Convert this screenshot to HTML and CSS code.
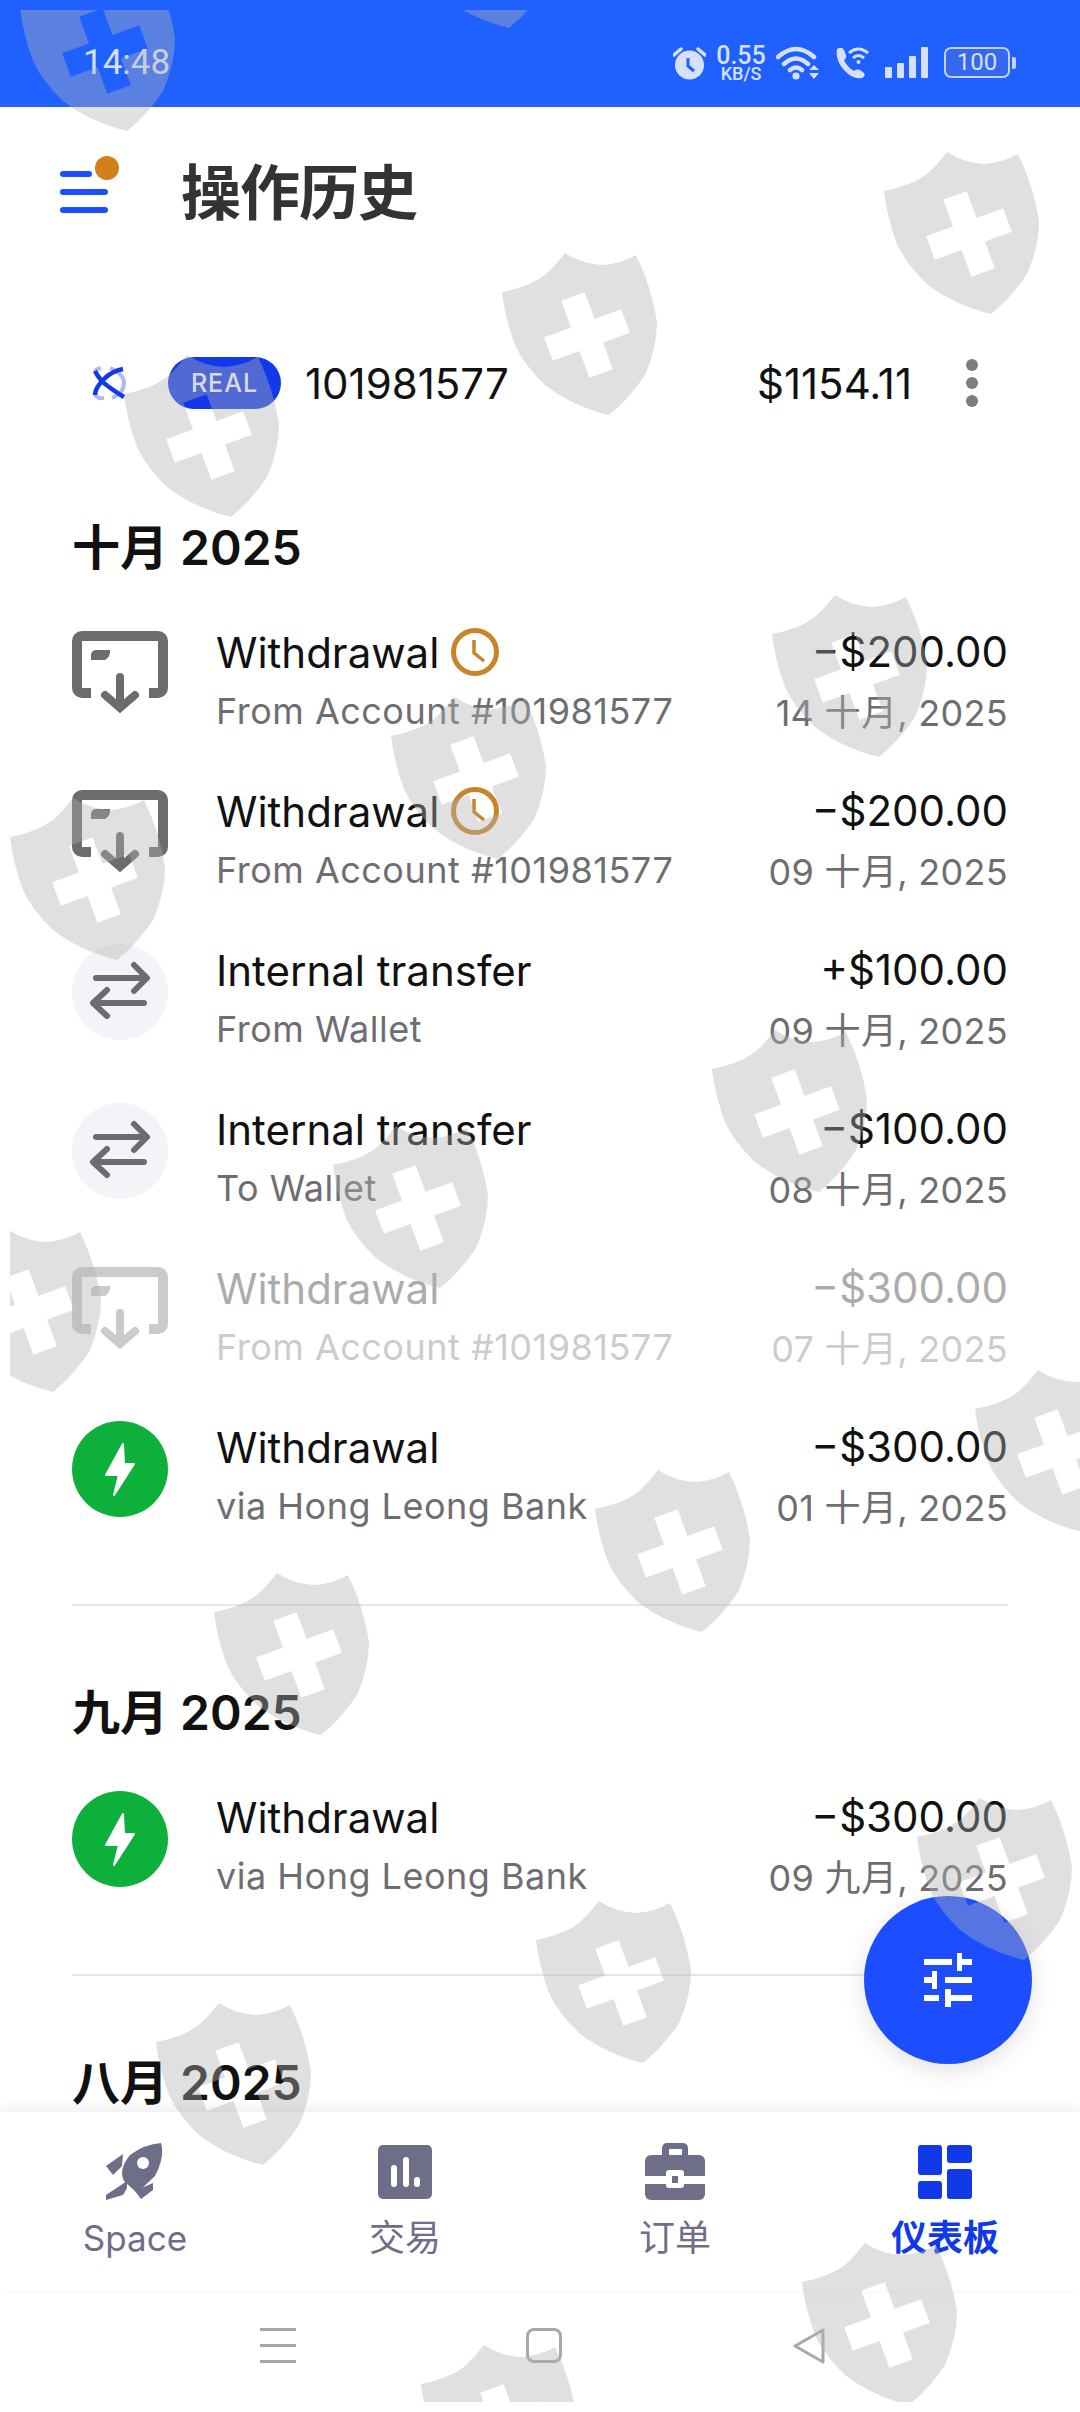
FILE: index.html
```html
<!DOCTYPE html>
<html lang="zh">
<head>
    <meta charset="UTF-8">
    <meta name="viewport" content="width=device-width, initial-scale=1.0">
    <title>操作历史</title>
    <link rel="stylesheet" href="styles.css">
</head>
<body>
    <svg class="defs" width="0" height="0">
        <defs>
            <symbol id="shield" viewBox="0 0 155 162">
                <path fill-rule="evenodd" d="M63 0Q80 11 100 12Q118 11 134 2Q150 35 155 69Q155 95 143 122Q128 145 107 162Q70 153 43 132Q22 112 13 92Q3 65 0 39Q27 34 43 22Q54 12 63 0ZM59.2 47.8L82.7 39.2L92.5 66L119.2 56.3L127.8 79.8L101 89.5L110.8 116.2L87.3 124.8L77.6 98L50.8 107.8L42.2 84.3L69 74.6Z"/>
            </symbol>
            <symbol id="withdraw" viewBox="0 0 96 84">
                <path d="M19 62H10a5 5 0 0 1-5-5V10a5 5 0 0 1 5-5H86a5 5 0 0 1 5 5V57a5 5 0 0 1-5 5H77" fill="none" stroke="currentColor" stroke-width="10"/>
                <path d="M19 24a5 5 0 0 1 5-5H38a10 10 0 0 1-5 10H19Z" fill="currentColor"/>
                <path d="M48 46V76M33 64L48 77L63 64" fill="none" stroke="currentColor" stroke-width="8" stroke-linecap="round"/>
            </symbol>
            <symbol id="clock" viewBox="0 0 48 48">
                <circle cx="24" cy="24" r="21.5" fill="none" stroke="#c9842a" stroke-width="5"/>
                <path d="M23 12V25L33 33" fill="none" stroke="#c9842a" stroke-width="3.5"/>
            </symbol>
            <symbol id="transfer" viewBox="0 0 96 96">
                <path d="M24 34H74M62 21L75 34L62 47M72 59H22M35 46L21 59L35 72" fill="none" stroke="#6c6c70" stroke-width="6" stroke-linecap="round" stroke-linejoin="round"/>
            </symbol>
            <symbol id="bolt" viewBox="0 0 96 96">
                <path d="M51 23L34 54H47L42 74L62 43H52Z" fill="#fff" stroke="#fff" stroke-width="2" stroke-linejoin="round"/>
            </symbol>
        </defs>
    </svg>

    <div class="phone">
        <div class="status-bar">
            <span class="clock-time">14:48</span>
            <div class="status-icons">
                <svg class="st-alarm" viewBox="0 0 33 34">
                    <circle cx="16.5" cy="19" r="14.5" fill="currentColor"/>
                    <path d="M1 9L8 3M32 9L25 3" stroke="currentColor" stroke-width="3.5" stroke-linecap="round"/>
                    <path d="M15 12V20L21 25" fill="none" stroke="#2060ff" stroke-width="3"/>
                </svg>
                <div class="net-speed"><span>0.55</span><small>KB/S</small></div>
                <svg class="st-wifi" viewBox="0 0 44 34">
                    <path d="M2 11Q20-5 38 11M8 18Q20 7 32 18M14 24Q20 19 26 24" fill="none" stroke="currentColor" stroke-width="4.5" stroke-linecap="round"/>
                    <circle cx="20" cy="30" r="3.6" fill="currentColor"/>
                    <path d="M33 24L38 19L43 24ZM33 27L38 33L43 27Z" fill="currentColor"/>
                </svg>
                <svg class="st-call" viewBox="0 0 35 32">
                    <path d="M2 2Q7-1 9 3L11 8Q12 11 9 13Q12 20 19 24Q22 21 25 23L29 26Q31 29 27 31Q18 33 9 23Q0 13 2 2Z" fill="currentColor"/>
                    <path d="M14 6Q23-2 33 6M18 11Q23 6 29 11" fill="none" stroke="currentColor" stroke-width="3"/>
                    <circle cx="23.5" cy="15" r="2" fill="currentColor"/>
                </svg>
                <div class="st-signal"><i class="s1"></i><i class="s2"></i><i class="s3"></i><i class="s4"></i></div>
                <div class="st-battery"><span class="batt-box">100</span><i class="batt-nub"></i></div>
            </div>
        </div>

        <header class="topbar">
            <button class="menu-btn" aria-label="menu">
                <i class="bar bar-short"></i><i class="bar"></i><i class="bar"></i>
                <i class="notify-dot"></i>
            </button>
            <h1>操作历史</h1>
        </header>

        <div class="account-row">
            <svg class="acc-logo" viewBox="0 0 34 34">
                <path d="M18 2Q32 8 32 17Q32 27 20 32M3 7Q3 3 9 2M3 28Q5 33 12 32" fill="none" stroke="#aeb9f3" stroke-width="4"/>
                <path d="M31 3Q20 5 12 13Q3 22 3 29M3 5Q8 15 17 21Q25 27 32 31" fill="none" stroke="#1239e8" stroke-width="4.5"/>
            </svg>
            <span class="real-pill">REAL</span>
            <span class="acc-number">101981577</span>
            <span class="acc-balance">$1154.11</span>
            <div class="kebab"><i></i><i></i><i></i></div>
        </div>

        <main class="history">
            <section class="month">
                <h2>十月 2025</h2>
                <div class="tx">
                    <svg class="tx-icon tx-withdraw"><use href="#withdraw"/></svg>
                    <div class="tx-info">
                        <div class="tx-title">Withdrawal <svg class="tx-clock"><use href="#clock"/></svg></div>
                        <div class="tx-sub">From Account #101981577</div>
                    </div>
                    <div class="tx-right">
                        <div class="tx-amount">−$200.00</div>
                        <div class="tx-date">14 十月, 2025</div>
                    </div>
                </div>
                <div class="tx">
                    <svg class="tx-icon tx-withdraw"><use href="#withdraw"/></svg>
                    <div class="tx-info">
                        <div class="tx-title">Withdrawal <svg class="tx-clock"><use href="#clock"/></svg></div>
                        <div class="tx-sub">From Account #101981577</div>
                    </div>
                    <div class="tx-right">
                        <div class="tx-amount">−$200.00</div>
                        <div class="tx-date">09 十月, 2025</div>
                    </div>
                </div>
                <div class="tx">
                    <svg class="tx-icon tx-round tx-transfer"><use href="#transfer"/></svg>
                    <div class="tx-info">
                        <div class="tx-title">Internal transfer</div>
                        <div class="tx-sub">From Wallet</div>
                    </div>
                    <div class="tx-right">
                        <div class="tx-amount">+$100.00</div>
                        <div class="tx-date">09 十月, 2025</div>
                    </div>
                </div>
                <div class="tx">
                    <svg class="tx-icon tx-round tx-transfer"><use href="#transfer"/></svg>
                    <div class="tx-info">
                        <div class="tx-title">Internal transfer</div>
                        <div class="tx-sub">To Wallet</div>
                    </div>
                    <div class="tx-right">
                        <div class="tx-amount">−$100.00</div>
                        <div class="tx-date">08 十月, 2025</div>
                    </div>
                </div>
                <div class="tx tx-faded">
                    <svg class="tx-icon tx-withdraw"><use href="#withdraw"/></svg>
                    <div class="tx-info">
                        <div class="tx-title">Withdrawal</div>
                        <div class="tx-sub">From Account #101981577</div>
                    </div>
                    <div class="tx-right">
                        <div class="tx-amount">−$300.00</div>
                        <div class="tx-date">07 十月, 2025</div>
                    </div>
                </div>
                <div class="tx">
                    <svg class="tx-icon tx-round tx-instant"><use href="#bolt"/></svg>
                    <div class="tx-info">
                        <div class="tx-title">Withdrawal</div>
                        <div class="tx-sub">via Hong Leong Bank</div>
                    </div>
                    <div class="tx-right">
                        <div class="tx-amount">−$300.00</div>
                        <div class="tx-date">01 十月, 2025</div>
                    </div>
                </div>
            </section>
            <section class="month">
                <h2>九月 2025</h2>
                <div class="tx">
                    <svg class="tx-icon tx-round tx-instant"><use href="#bolt"/></svg>
                    <div class="tx-info">
                        <div class="tx-title">Withdrawal</div>
                        <div class="tx-sub">via Hong Leong Bank</div>
                    </div>
                    <div class="tx-right">
                        <div class="tx-amount">−$300.00</div>
                        <div class="tx-date">09 九月, 2025</div>
                    </div>
                </div>
            </section>
            <section class="month">
                <h2>八月 2025</h2>
            </section>
        </main>

        <nav class="tabbar">
            <a class="tab">
                <svg class="tab-icon" viewBox="0 0 60 57">
                    <path d="M56 0Q60 14 50 33L32 50L19 38Q13 27 25 12Q40 1 56 0Z" fill="currentColor"/>
                    <circle cx="38" cy="20" r="6" fill="#fff"/>
                    <path d="M18 11L1 23L8 32L17 23ZM22 38L1 52V57L18 52L22 45ZM48 40L30 48L36 56L48 47Z" fill="currentColor"/>
                </svg>
                <span>Space</span>
            </a>
            <a class="tab tab-cjk">
                <svg class="tab-icon tab-icon-sq" viewBox="0 0 54 54">
                    <rect width="54" height="54" rx="5" fill="currentColor"/>
                    <path d="M16 23V39M28 15V39M39 35V39" stroke="#fff" stroke-width="6" stroke-linecap="round"/>
                </svg>
                <span>交易</span>
            </a>
            <a class="tab tab-cjk">
                <svg class="tab-icon" viewBox="0 0 60 57">
                    <path d="M17 14V5a5 5 0 0 1 5-5H38a5 5 0 0 1 5 5V14H37V6H24V14Z" fill="currentColor"/>
                    <rect y="12" width="60" height="45" rx="6" fill="currentColor"/>
                    <rect y="33" width="60" height="8" fill="#fff"/>
                    <rect x="21" y="27" width="18" height="18" rx="3" fill="#fff"/>
                    <rect x="27" y="33" width="6" height="7" fill="currentColor"/>
                </svg>
                <span>订单</span>
            </a>
            <a class="tab tab-active">
                <svg class="tab-icon tab-icon-sq" viewBox="0 0 54 54" fill="currentColor">
                    <rect width="24" height="30" rx="3"/>
                    <rect x="29" width="25" height="18" rx="3"/>
                    <rect y="36" width="24" height="18" rx="3"/>
                    <rect x="29" y="24" width="25" height="30" rx="3"/>
                </svg>
                <span>仪表板</span>
            </a>
        </nav>

        <div class="sys-nav">
            <div class="sys-menu"><i></i><i></i><i></i></div>
            <div class="sys-home"></div>
            <svg class="sys-back" viewBox="0 0 34 36">
                <path d="M31 2V34L3 18Z" fill="none" stroke="#a8a8a8" stroke-width="3" stroke-linejoin="round"/>
            </svg>
        </div>

        <button class="fab" aria-label="filter">
            <svg viewBox="0 0 48 54" fill="#fff">
                <path d="M0 6H28V12H0ZM33 0H38V6H48V12H38V18H33ZM0 24H8V18H13V36H8V30H0ZM21 24H48V30H21ZM0 42H15V48H0ZM21 36H27V42H48V48H27V54H21Z"/>
            </svg>
        </button>

        <!-- watermark layer, sits over the whole screen -->
        <div class="watermarks">
            <svg class="wm wm-a"><use href="#shield"/></svg>
            <svg class="wm wm-b"><use href="#shield"/></svg>
            <svg class="wm wm-c"><use href="#shield"/></svg>
            <svg class="wm wm-d"><use href="#shield"/></svg>
            <svg class="wm wm-e"><use href="#shield"/></svg>
            <svg class="wm wm-f"><use href="#shield"/></svg>
            <svg class="wm wm-g"><use href="#shield"/></svg>
            <svg class="wm wm-h"><use href="#shield"/></svg>
            <svg class="wm wm-i"><use href="#shield"/></svg>
            <svg class="wm wm-j"><use href="#shield"/></svg>
            <svg class="wm wm-k"><use href="#shield"/></svg>
            <svg class="wm wm-l"><use href="#shield"/></svg>
            <svg class="wm wm-m"><use href="#shield"/></svg>
            <svg class="wm wm-n"><use href="#shield"/></svg>
            <svg class="wm wm-o"><use href="#shield"/></svg>
            <svg class="wm wm-p"><use href="#shield"/></svg>
            <svg class="wm wm-q"><use href="#shield"/></svg>
            <svg class="wm wm-r"><use href="#shield"/></svg>
            <svg class="wm wm-s"><use href="#shield"/></svg>
        </div>
    </div>
</body>
</html>
```

FILE: styles.css
```css
/* General reset */
* {
    margin: 0;
    padding: 0;
    box-sizing: border-box;
}

body {
    font-family: 'Inter', 'Noto Sans CJK SC', sans-serif;
    background: #fff;
    color: #111;
}

i {
    display: block;
}

.defs {
    position: absolute;
}

.phone {
    position: relative;
    width: 1080px;
    height: 2412px;
    overflow: hidden;
    display: flex;
    flex-direction: column;
}

/* Status bar */
.status-bar {
    height: 107px;
    flex: none;
    background: #2060ff;
    color: #d6e0fb;
    display: flex;
    align-items: center;
    justify-content: space-between;
    padding: 18px 64px 0 83px;
}

.clock-time {
    font-family: 'Roboto', sans-serif;
    font-size: 35px;
    color: #d6e0fb;
}

.status-icons {
    display: flex;
    align-items: center;
}

.st-alarm {
    width: 33px;
    height: 34px;
    margin-right: 10px;
}

.net-speed {
    width: 50px;
    display: flex;
    flex-direction: column;
    align-items: center;
    font-family: 'Roboto', sans-serif;
    font-weight: 500;
    margin-right: 10px;
}

.net-speed span {
    font-size: 25px;
    line-height: 21px;
}

.net-speed small {
    font-size: 18px;
    line-height: 15px;
}

.st-wifi {
    width: 44px;
    height: 34px;
    margin-right: 15px;
}

.st-call {
    width: 35px;
    height: 32px;
    margin-right: 15px;
}

.st-signal {
    display: flex;
    align-items: flex-end;
    gap: 5px;
    height: 31px;
    margin-right: 16px;
}

.st-signal i {
    width: 7px;
    background: currentColor;
    border-radius: 1px;
}

.s1 { height: 11px; }
.s2 { height: 15px; }
.s3 { height: 22px; }
.s4 { height: 31px; }

.st-battery {
    display: flex;
    align-items: center;
    gap: 2px;
}

.batt-box {
    width: 66px;
    height: 31px;
    border: 2px solid #c3d3fb;
    border-radius: 7px;
    font-family: 'Roboto', sans-serif;
    font-size: 24px;
    line-height: 27px;
    text-align: center;
    background: #3568ee;
}

.batt-nub {
    width: 4px;
    height: 12px;
    background: #c3d3fb;
    border-radius: 0 2px 2px 0;
}

/* Top bar */
.topbar {
    height: 172px;
    flex: none;
    display: flex;
    align-items: center;
    padding-left: 60px;
}

.menu-btn {
    position: relative;
    width: 48px;
    height: 42px;
    margin-right: 73px;
    margin-top: -2px;
    border: none;
    background: none;
    display: flex;
    flex-direction: column;
    justify-content: space-between;
}

.bar {
    width: 48px;
    height: 6px;
    background: #1c4dff;
    border-radius: 3px;
}

.bar-short {
    width: 32px;
}

.notify-dot {
    position: absolute;
    top: -15px;
    left: 35px;
    width: 24px;
    height: 24px;
    border-radius: 50%;
    background: #d3801c;
}

h1 {
    font-size: 60px;
    font-weight: 700;
    color: #333;
    line-height: 1;
    letter-spacing: -1px;
}

/* Account row */
.account-row {
    height: 208px;
    flex: none;
    display: flex;
    align-items: center;
    padding: 0 102px 0 92px;
    font-size: 42px;
}

.acc-logo {
    width: 34px;
    height: 34px;
    margin-right: 42px;
}

.real-pill {
    width: 113px;
    height: 52px;
    border-radius: 26px;
    background: #1239e8;
    color: #f0f3fd;
    font-size: 25px;
    font-weight: 500;
    letter-spacing: 1px;
    line-height: 52px;
    text-align: center;
    margin-right: 24px;
}

.acc-number {
    flex: 1;
}

.acc-balance {
    margin-right: 54px;
}

.kebab {
    display: flex;
    flex-direction: column;
    gap: 6px;
}

.kebab i {
    width: 12px;
    height: 12px;
    border-radius: 50%;
    background: #7d7d7d;
}

/* History list */
.history {
    flex: 1;
    min-height: 0;
    overflow: hidden;
    padding: 29px 72px 0;
}

.month {
    border-bottom: 2px solid #e6e6ea;
    padding-bottom: 47px;
    margin-bottom: 75px;
}

h2 {
    font-size: 48px;
    font-weight: 600;
    line-height: 64px;
    color: #111;
    margin-bottom: 23px;
}

.tx {
    height: 159px;
    display: flex;
    align-items: center;
}

.tx-faded {
    opacity: 0.35;
}

.tx-icon {
    width: 96px;
    flex: none;
    align-self: flex-start;
    margin-right: 48px;
}

.tx-withdraw {
    height: 84px;
    margin-top: 28px;
    color: #6c6c6e;
}

.tx-round {
    height: 96px;
    margin-top: 23px;
    border-radius: 50%;
}

.tx-transfer {
    background: #f4f4f8;
}

.tx-instant {
    background: #0db03b;
}

.tx-info {
    flex: 1;
    padding-bottom: 2px;
}

.tx-title,
.tx-amount {
    font-size: 42px;
    line-height: 59px;
    color: #111;
}

.tx-title {
    display: flex;
    align-items: center;
    gap: 12px;
}

.tx-clock {
    width: 48px;
    height: 48px;
}

.tx-sub,
.tx-date {
    font-size: 36px;
    line-height: 59px;
    color: #6e6e72;
}

.tx-sub {
    letter-spacing: 0.5px;
}

.tx-date {
    margin-top: 3px;
    letter-spacing: 0.3px;
}

.tx-right {
    text-align: right;
}

/* Bottom tabs */
.tabbar {
    height: 178px;
    flex: none;
    position: relative;
    background: #fff;
    box-shadow: 0 -4px 14px rgba(0, 0, 0, 0.07);
    display: grid;
    grid-template-columns: repeat(4, 1fr);
    padding-top: 31px;
}

.tab {
    display: flex;
    flex-direction: column;
    align-items: center;
    color: #6f6e88;
    font-size: 35px;
}

.tab-icon {
    height: 57px;
    margin-bottom: 14px;
}

.tab-icon-sq {
    height: 54px;
    margin: 2px 0 15px;
}

.tab span {
    line-height: 48px;
}

.tab-cjk {
    font-size: 36px;
}

.tab-active {
    color: #1239e8;
    font-weight: 700;
    font-size: 36px;
}

/* System navigation */
.sys-nav {
    height: 122px;
    flex: none;
    background: #fff;
    display: flex;
    justify-content: center;
    gap: 230px;
    padding: 38px 0 0 6px;
}

.sys-menu {
    width: 36px;
    height: 35px;
    display: flex;
    flex-direction: column;
    justify-content: space-between;
}

.sys-menu i {
    height: 3px;
    background: #a8a8a8;
}

.sys-home {
    width: 36px;
    height: 35px;
    border: 3px solid #a8a8a8;
    border-radius: 8px;
}

.sys-back {
    width: 34px;
    height: 36px;
}

/* Floating filter button */
.fab {
    position: absolute;
    left: 864px;
    top: 1896px;
    width: 168px;
    height: 168px;
    border: none;
    border-radius: 50%;
    background: #1c4dff;
    box-shadow: 0 6px 24px rgba(0, 0, 0, 0.12);
    display: flex;
    align-items: center;
    justify-content: center;
}

.fab svg {
    width: 48px;
    height: 54px;
}

/* Watermark overlay */
.watermarks {
    position: absolute;
    inset: 10px 0 10px 10px;
    overflow: hidden;
    pointer-events: none;
}

.wm {
    position: absolute;
    width: 155px;
    height: 162px;
    fill: rgba(178, 178, 178, 0.4);
}

.wm-a { left: 10px; top: -41px; }
.wm-b { left: 392px; top: -144px; }
.wm-c { left: 874px; top: 142px; }
.wm-d { left: 492px; top: 243px; }
.wm-e { left: 114px; top: 345px; }
.wm-f { left: 762px; top: 585px; }
.wm-g { left: 381px; top: 687px; }
.wm-h { left: 0; top: 788px; }
.wm-i { left: 702px; top: 1020px; }
.wm-j { left: 323px; top: 1116px; }
.wm-k { left: -64px; top: 1220px; }
.wm-l { left: 965px; top: 1360px; }
.wm-m { left: 585px; top: 1460px; }
.wm-n { left: 204px; top: 1563px; }
.wm-o { left: 907px; top: 1788px; }
.wm-p { left: 526px; top: 1891px; }
.wm-q { left: 146px; top: 1993px; }
.wm-r { left: 792px; top: 2233px; }
.wm-s { left: 411px; top: 2335px; }
```
